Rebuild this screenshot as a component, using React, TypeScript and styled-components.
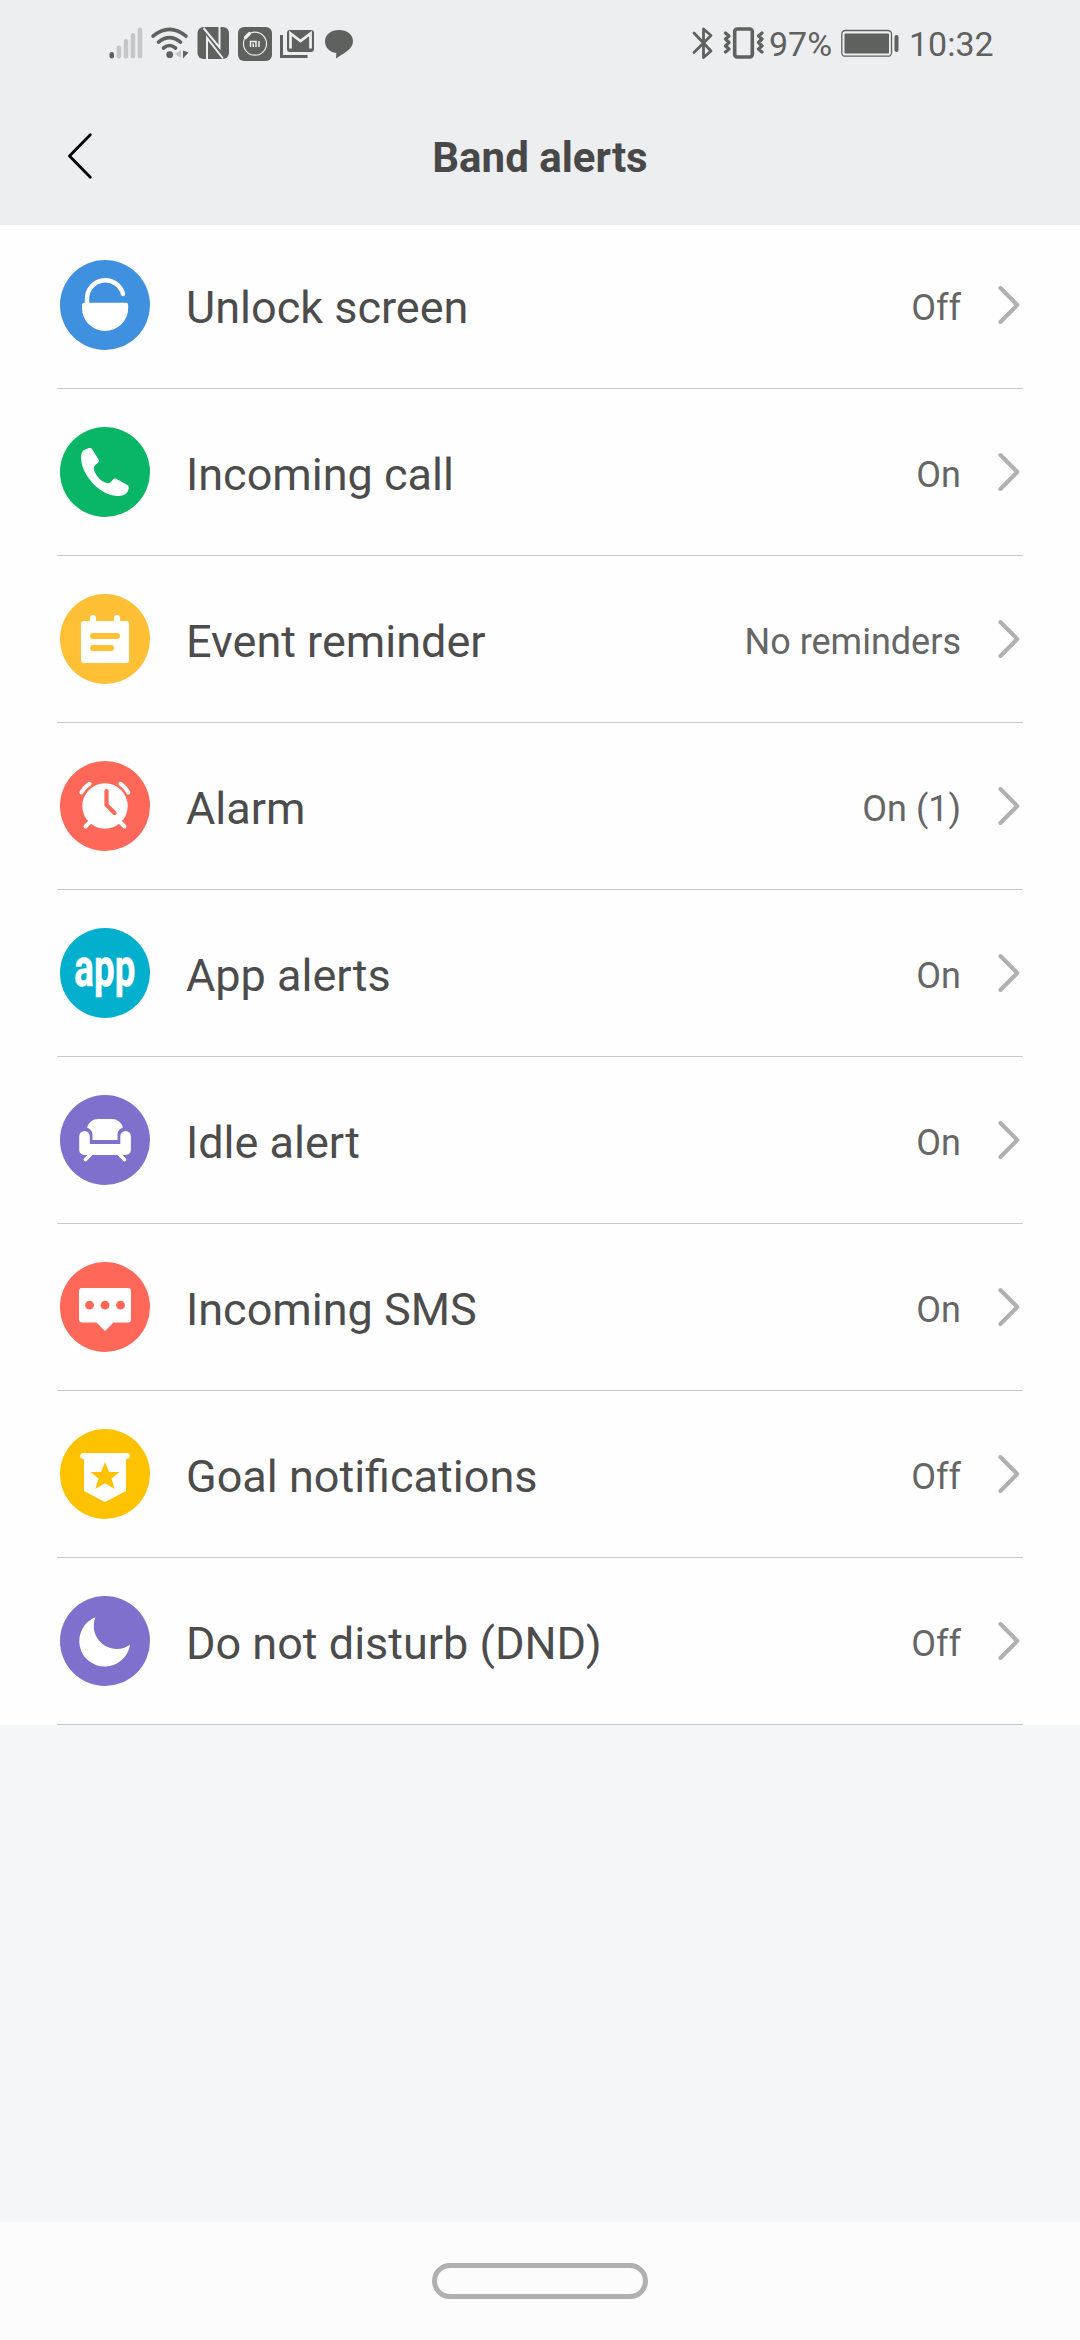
import React from 'react';
import styled, { createGlobalStyle } from 'styled-components';

const GlobalStyle = createGlobalStyle`
  *, *::before, *::after { box-sizing: border-box; }
  html, body { margin: 0; padding: 0; }
  body {
    background: #f5f6f8;
    font-family: Roboto, "Noto Sans", sans-serif;
  }
`;

const INK = '#5f615f';

const Screen = styled.div`
  width: 1080px;
  height: 2340px;
  display: flex;
  flex-direction: column;
  background: #f5f6f8;
  overflow: hidden;
`;

const StatusBar = styled.header`
  height: 88px;
  flex: none;
  display: flex;
  justify-content: space-between;
  padding-left: 95px;
  background: #edeef0;
  color: ${INK};
`;

const StatusText = styled.span<{ $width: number }>`
  width: ${(p) => p.$width}px;
  padding-left: 2px;
  font-size: 34px;
  line-height: 88px;
  white-space: nowrap;
`;

const StatusSide = styled.div`
  display: flex;
  align-items: flex-start;
`;

const TitleBar = styled.nav`
  height: 137px;
  flex: none;
  display: grid;
  grid-template-columns: 160px 1fr 160px;
  background: #edeef0;
`;

const BackButton = styled.button`
  padding: 0;
  border: 0;
  background: none;
  display: block;
  height: 137px;
`;

const Title = styled.h1`
  margin: 0;
  padding-top: 3px;
  font-size: 42px;
  line-height: 134px;
  font-weight: 700;
  text-align: center;
  color: #484848;
`;

const List = styled.ul`
  margin: 0;
  padding: 0 57px;
  list-style: none;
  background: #fefefe;
`;

const Row = styled.li`
  height: 167px;
  display: flex;
  align-items: center;
  padding: 0 3px;
  border-bottom: 1px solid #c8c8c8;

  &:first-child {
    height: 164px;
    padding-bottom: 3px;
  }
`;

const Badge = styled.span<{ $color: string }>`
  width: 90px;
  height: 90px;
  flex: none;
  border-radius: 50%;
  background: ${(p) => p.$color};
  display: flex;
  align-items: center;
  justify-content: center;
`;

const AppWord = styled.span`
  color: #fff;
  font-size: 54px;
  font-weight: 700;
  line-height: 90px;
  -webkit-text-stroke: 0.5px #fff;
  transform: translateY(-5px) scaleX(0.68);
`;

const Label = styled.span`
  margin-left: 36px;
  padding-top: 5px;
  font-size: 45px;
  line-height: 60px;
  color: #4c4c4c;
  flex: 1;
`;

const Value = styled.span`
  margin-right: 37px;
  padding-top: 5px;
  font-size: 36px;
  line-height: 60px;
  color: #666;
`;

const NavBar = styled.footer`
  height: 118px;
  margin-top: auto;
  flex: none;
  display: flex;
  justify-content: center;
  padding-top: 41px;
  background: #fcfcfc;
`;

const HomePill = styled.div`
  width: 216px;
  height: 36px;
  border: 5px solid #b0b0b0;
  border-radius: 18px;
`;

const StatusIcons = () => (
  <svg width="280" height="88" viewBox="95 0 280 88" fill={INK}>
    <rect x="109.500" y="52" width="4.500" height="6.500" rx="2.200" />
    <g fill="#c5c6c7">
      <rect x="116.700" y="45.500" width="4.500" height="13" rx="2.200" />
      <rect x="123.700" y="39" width="4.500" height="19.500" rx="2.200" />
      <rect x="130.700" y="33" width="4.500" height="25.500" rx="2.200" />
      <rect x="137.700" y="27.500" width="4.500" height="31" rx="2.200" />
    </g>
    <g fill="none" stroke={INK} strokeWidth="3.600" strokeLinecap="round">
      <path d="M153 36.200Q169.500 22.500 186 36.200" />
      <path d="M158.500 42.200Q169.500 33 180.500 42.200" />
      <path d="M163.500 48Q169.500 43 175.500 48" />
    </g>
    <circle cx="169.700" cy="54.700" r="3.400" />
    <path d="M181 50v8l-6-4z" fill="#c5c6c7" />
    <path d="M183 50.500v8l5.500-6z" />
    <rect x="197.500" y="27" width="31.500" height="32" rx="6" />
    <path d="M203.500 28L219.500 47.500V27M207 59V38L223 58.500" fill="none" stroke="#edeef0" strokeWidth="2" />
    <rect x="238" y="27" width="34" height="34" rx="6" />
    <circle cx="255" cy="43.700" r="11.500" fill="none" stroke="#edeef0" strokeWidth="1.200" />
    <path d="M245.500 37.500l4-4" stroke="#edeef0" strokeWidth="3.200" strokeLinecap="round" />
    <path d="M250.500 47v-5.500h5.500v5.500M253.300 43.500v3.500M259 41v6" fill="none" stroke="#edeef0" strokeWidth="1.500" />
    <path d="M281.500 35v21.500h26" fill="none" stroke={INK} strokeWidth="3" />
    <rect x="287" y="30" width="27" height="22" rx="3" />
    <path d="M290.500 48.500V33.500l10 7.500 10-7.500V48.500" fill="none" stroke="#edeef0" strokeWidth="2.800" />
    <path d="M339 30c8 0 14 4.500 14 11.200C353 49 344 53 336 58.500l.3-5.500C329.500 52 325 47.500 325 41.500 325 34.500 331 30 339 30z" />
  </svg>
);

const PhoneStateIcons = () => (
  <svg width="97" height="88" viewBox="670 0 97 88" fill="none" stroke={INK} strokeLinecap="round" strokeLinejoin="round">
    <path d="M694 33l17 18-7.500 6.500V29l7.500 6.500-17 17" strokeWidth="2.800" />
    <rect x="734.700" y="29" width="17.600" height="28" rx="2.500" strokeWidth="3.600" />
    <path d="M725.500 33l3.500 3-3.500 3 3.500 3.500-3.500 3.500 3.500 3-3.500 3M762 33l-3.500 3 3.500 3-3.500 3.500 3.500 3.500-3.500 3 3.500 3" strokeWidth="3.200" />
  </svg>
);

const BatteryIcon = () => (
  <svg width="71" height="88" viewBox="836 0 71 88">
    <rect x="841.800" y="30.500" width="49.700" height="25.700" rx="3.500" fill="none" stroke={INK} strokeWidth="1.300" />
    <rect x="844.500" y="33.500" width="44.500" height="20" rx="1" fill={INK} />
    <rect x="894.500" y="35" width="4" height="17" rx="2" fill={INK} />
  </svg>
);

const Chevron = () => (
  <svg width="22" height="40" viewBox="0 0 22 40" fill="none" stroke="#b0b0b0" strokeWidth="4" strokeLinecap="round" strokeLinejoin="round">
    <path d="M2.400 3L19.300 20 2.400 37" />
  </svg>
);

const Glyph = ({ children }: { children: React.ReactNode }) => (
  <svg width="90" height="90" viewBox="0 0 90 90" fill="#fff">
    {children}
  </svg>
);

const UnlockGlyph = () => (
  <Glyph>
    <path d="M27 44V39a18.300 18.300 0 0 1 36-5" fill="none" stroke="#fff" strokeWidth="4.400" strokeLinecap="round" />
    <path d="M24 42.700H66a2.200 2.200 0 0 1 2.200 2.200V48a23.100 23.100 0 0 1-46.200 0V44.900A2.200 2.200 0 0 1 24 42.700z" />
  </Glyph>
);

const CallGlyph = () => (
  <Glyph>
    <path d="M28.500 21.300c1.600-.6 2.900-.4 3.700.9l6.300 10.300c.7 1.200.6 2.400-.4 3.200-3.600 2.300-5 4.500-4 7.500 2 5.700 6 10 11.300 12.400 3.200 1.400 5.200.5 7.600-3 .8-1.200 2-1.500 3.200-.9L67.300 58c1.400.8 1.900 2 1.500 3.500-.9 3.800-2.700 6-6.500 7C54 70.500 42 66 34 57.500 24.500 47.800 20 36.500 21.300 27.500c.5-3.300 3-5.300 7.200-6.200z" />
  </Glyph>
);

const EventGlyph = () => (
  <Glyph>
    <rect x="21" y="27" width="48" height="42" rx="3" />
    <path d="M33 30V24M57 30V24" stroke="#fff" strokeWidth="6" strokeLinecap="round" />
    <path d="M33 42H57M33 54H51" stroke="#ffc036" strokeWidth="6" strokeLinecap="round" />
  </Glyph>
);

const AlarmGlyph = () => (
  <Glyph>
    <circle cx="45" cy="45" r="22.700" />
    <path d="M21.300 31.500Q24.500 26 29.500 22.800M68.300 31.500Q65.500 26 60.500 22.800M30.500 60.500L25.500 65.500M59.500 60.500L64.500 65.500" fill="none" stroke="#fff" strokeWidth="4" strokeLinecap="round" />
    <path d="M46.500 30V44L54.500 52" fill="none" stroke="#ff6858" strokeWidth="4.200" strokeLinecap="round" />
  </Glyph>
);

const SofaGlyph = () => (
  <Glyph>
    <path d="M27 32.500Q30 24 38 24H52Q60 24 63 32.500C58.500 34 57.500 37 57.500 40V45H32.500V40C32.500 37 31 34 27 32.500z" />
    <path d="M24.500 36a5.300 5.300 0 0 1 5.300 5.300V49H60.300V41.300a5.300 5.300 0 0 1 10.600 0V55a5 5 0 0 1-5 5H24.200a5 5 0 0 1-5-5V41.300A5.300 5.300 0 0 1 24.500 36z" />
    <path d="M30.500 59.500L25.500 64.500M59.500 59.500L64.500 64.500" stroke="#fff" strokeWidth="3.800" strokeLinecap="round" />
  </Glyph>
);

const SmsGlyph = () => (
  <Glyph>
    <path d="M22 26H68a3 3 0 0 1 3 3V57.500a3 3 0 0 1-3 3H53.500L45 69 36.500 60.500H22a3 3 0 0 1-3-3V29a3 3 0 0 1 3-3z" />
    <g fill="#ff6858">
      <circle cx="29.500" cy="43.200" r="4.400" />
      <circle cx="45" cy="43.200" r="4.400" />
      <circle cx="60.500" cy="43.200" r="4.400" />
    </g>
  </Glyph>
);

const GoalGlyph = () => (
  <Glyph>
    <rect x="20.300" y="24" width="49.400" height="6" rx="3" />
    <path d="M24 27H66V62L45 73 24 62z" />
    <path d="M45 33L49 43H59.500L51.500 49.500 54.700 60 45 54.200 35.300 60 38.500 49.500 30.500 43H41z" fill="#ffc200" />
  </Glyph>
);

const MoonGlyph = () => (
  <Glyph>
    <path d="M35.400 21.300A25.500 25.500 0 1 0 70 48.700A23 23 0 0 1 35.400 21.300z" />
  </Glyph>
);

const AppGlyph = () => <AppWord>app</AppWord>;

interface Alert {
  label: string;
  value: string;
  color: string;
  Icon: React.FC;
}

const alerts: Alert[] = [
  { label: 'Unlock screen', value: 'Off', color: '#4090e0', Icon: UnlockGlyph },
  { label: 'Incoming call', value: 'On', color: '#09b567', Icon: CallGlyph },
  { label: 'Event reminder', value: 'No reminders', color: '#ffc036', Icon: EventGlyph },
  { label: 'Alarm', value: 'On (1)', color: '#ff6858', Icon: AlarmGlyph },
  { label: 'App alerts', value: 'On', color: '#02b0ce', Icon: AppGlyph },
  { label: 'Idle alert', value: 'On', color: '#7f70ce', Icon: SofaGlyph },
  { label: 'Incoming SMS', value: 'On', color: '#ff6858', Icon: SmsGlyph },
  { label: 'Goal notifications', value: 'Off', color: '#ffc200', Icon: GoalGlyph },
  { label: 'Do not disturb (DND)', value: 'Off', color: '#7f70ce', Icon: MoonGlyph },
];

export default function App() {
  return (
    <Screen>
      <GlobalStyle />
      <StatusBar>
        <StatusSide>
          <StatusIcons />
        </StatusSide>
        <StatusSide>
          <PhoneStateIcons />
          <StatusText $width={69}>97%</StatusText>
          <BatteryIcon />
          <StatusText $width={173}>10:32</StatusText>
        </StatusSide>
      </StatusBar>
      <TitleBar>
        <BackButton aria-label="Back">
          <svg width="160" height="137" viewBox="0 88 160 137" fill="none" stroke="#000" strokeWidth="2.800" strokeLinecap="round" strokeLinejoin="round">
            <path d="M90.300 134.700L69.500 156 90.300 177.300" />
          </svg>
        </BackButton>
        <Title>Band alerts</Title>
      </TitleBar>
      <List>
        {alerts.map(({ label, value, color, Icon }) => (
          <Row key={label}>
            <Badge $color={color}>
              <Icon />
            </Badge>
            <Label>{label}</Label>
            <Value>{value}</Value>
            <Chevron />
          </Row>
        ))}
      </List>
      <NavBar>
        <HomePill />
      </NavBar>
    </Screen>
  );
}
